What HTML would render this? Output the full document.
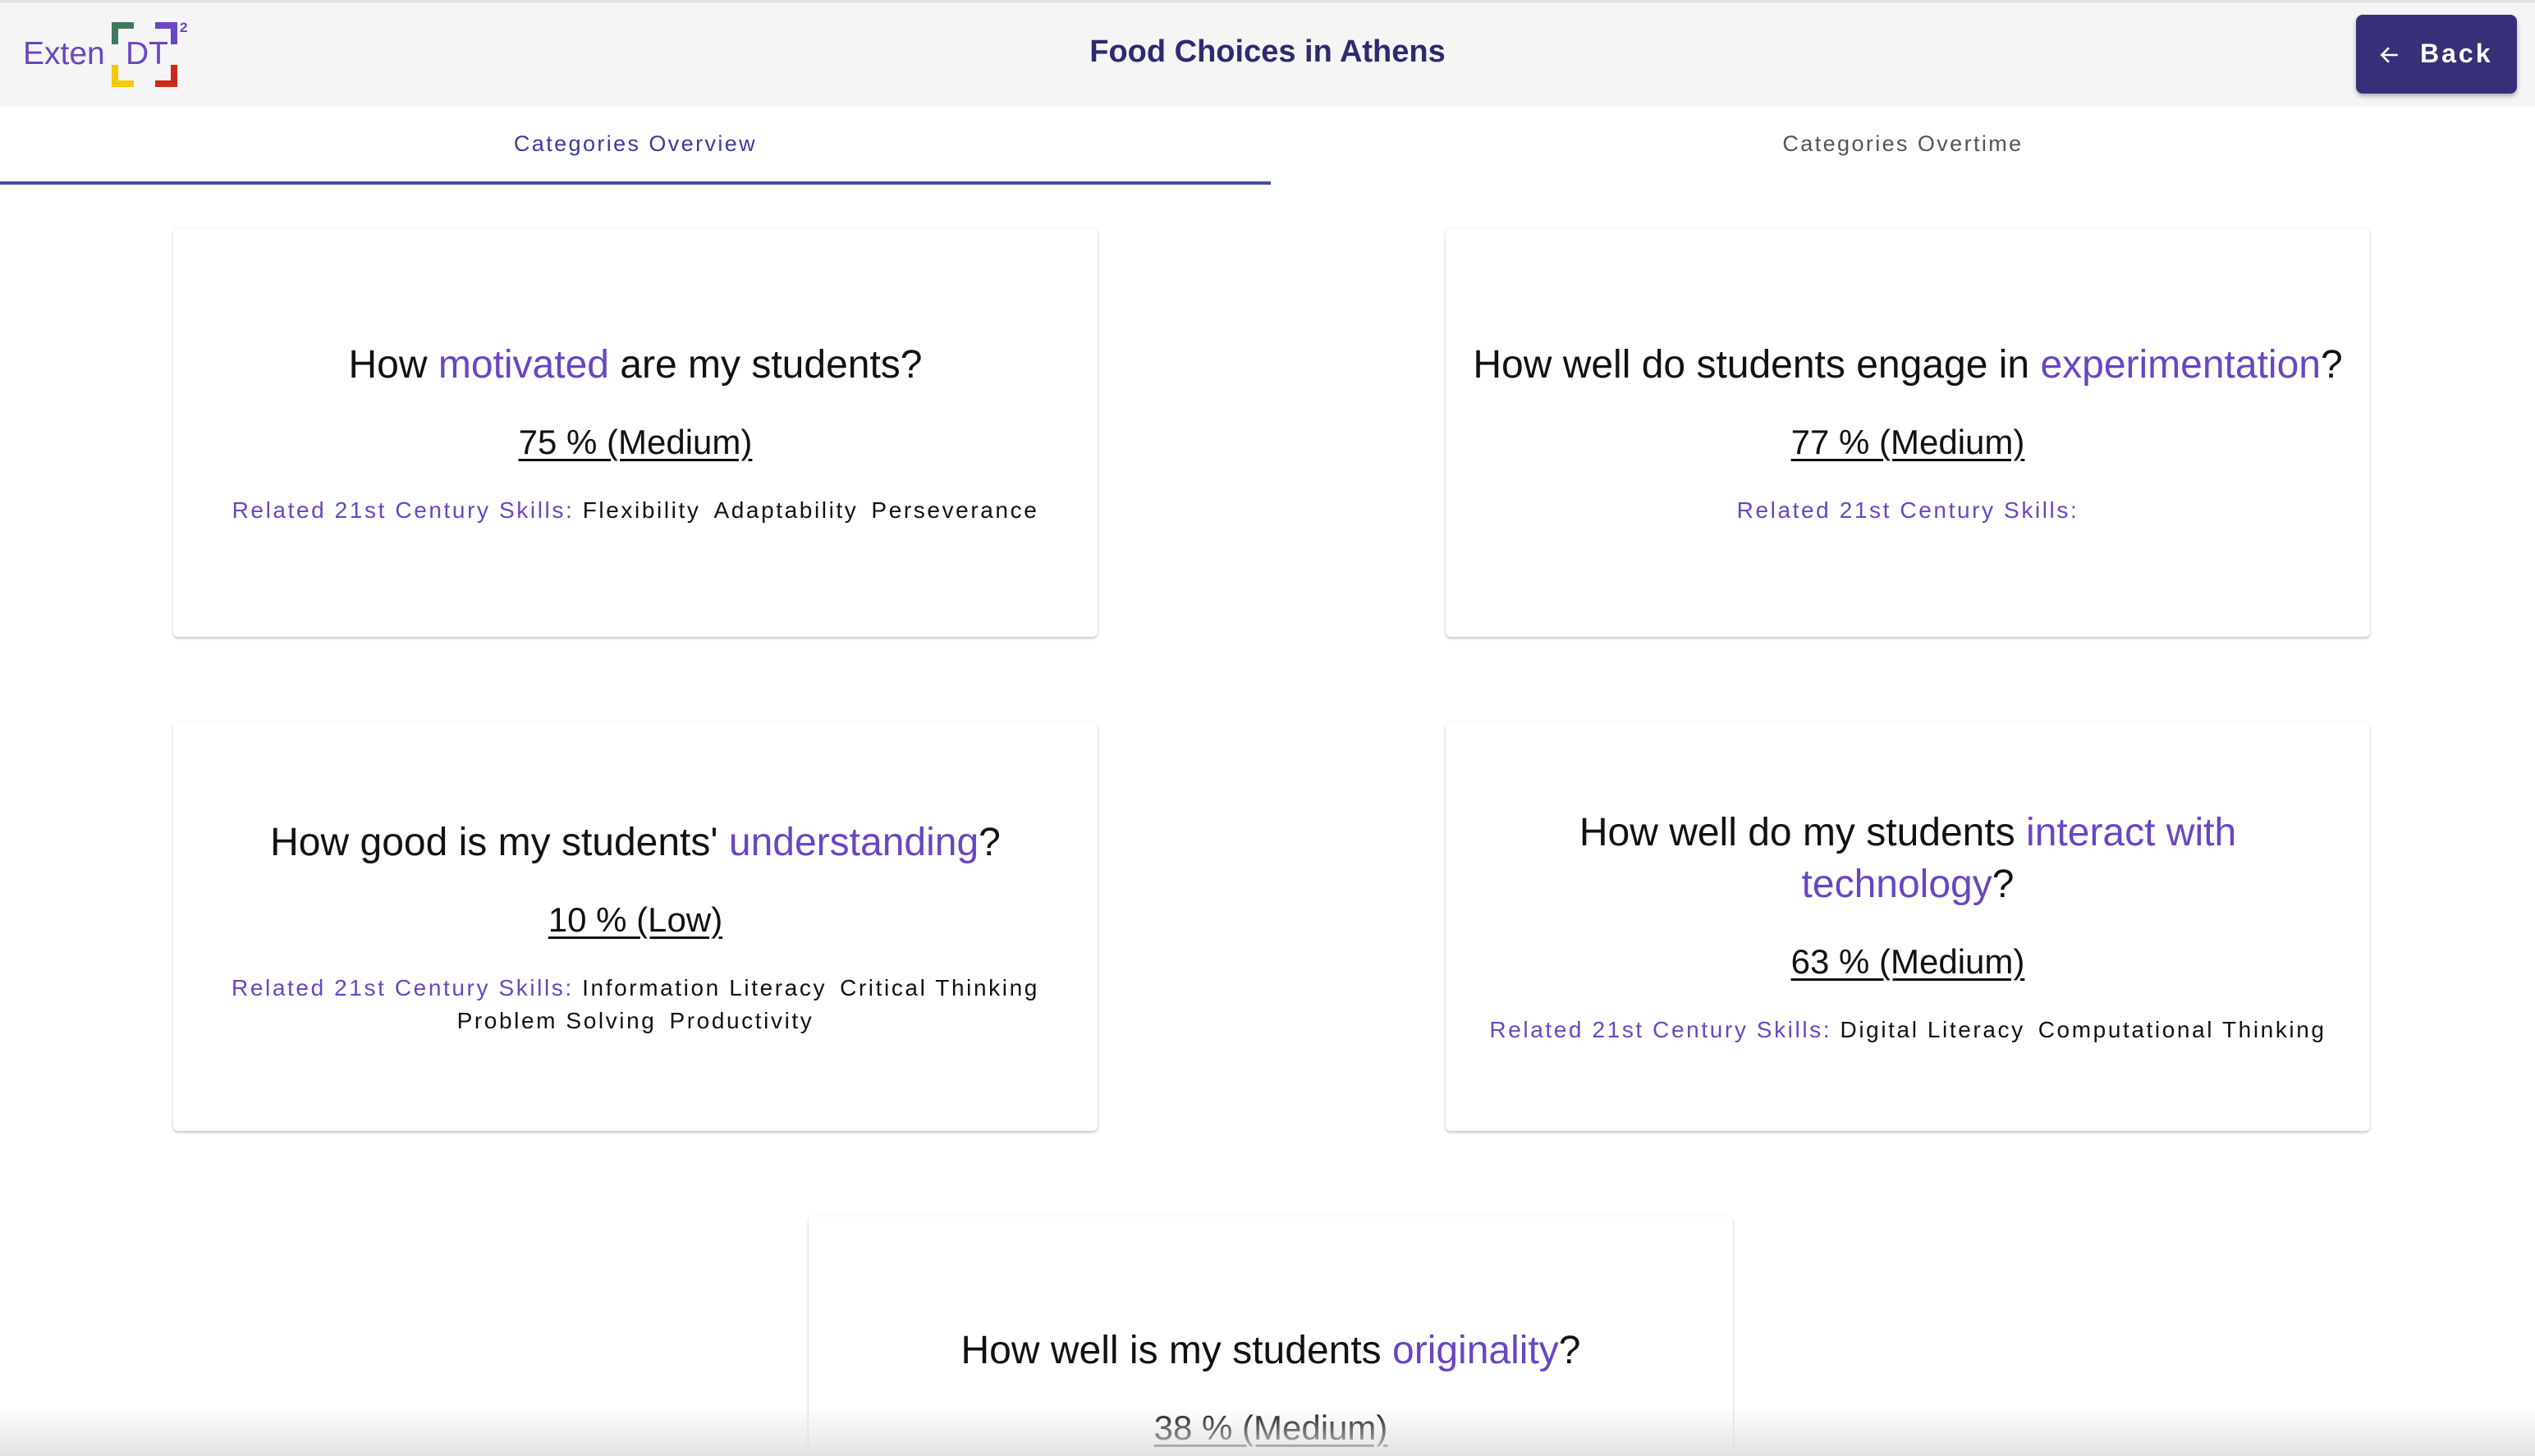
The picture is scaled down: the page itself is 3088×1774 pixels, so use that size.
<!DOCTYPE html>
<html><head><meta charset="utf-8">
<style>
*{box-sizing:border-box;margin:0;padding:0}
html,body{width:3088px;height:1774px;overflow:hidden;background:#fff;font-family:"Liberation Sans",sans-serif}
#w{position:relative;width:3088px;height:1774px;overflow:hidden}
.top{position:absolute;left:0;top:0;width:3088px;height:3px;background:#e2e2e2}
.hdr{position:absolute;left:0;top:3px;width:3088px;height:127px;background:#f5f5f5}
.exten{position:absolute;left:28px;top:44px;font-size:39px;color:#6a45c4}
.br{position:absolute;width:27px;height:27px}
.dt{position:absolute;left:153px;top:44px;font-size:39px;color:#6a45c4}
.sup{position:absolute;left:219px;top:24px;font-size:17px;font-weight:bold;color:#6a45c4}
.title{position:absolute;left:0;width:3088px;top:42px;text-align:center;font-size:38px;font-weight:bold;color:#2e2a6e}
.back{position:absolute;left:2870px;top:18px;width:196px;height:96px;background:#372f78;border-radius:8px;box-shadow:0 3px 6px rgba(0,0,0,.3);color:#fff;font-weight:bold;font-size:32px;letter-spacing:3px}
.back svg{position:absolute;left:28px;top:36px}
.back span{position:absolute;left:78px;top:29px}
.tab{position:absolute;top:160px;font-size:27px;letter-spacing:2.4px;text-align:center;width:1548px}
.ind{position:absolute;left:0;top:221px;width:1548px;height:4px;background:#3f4fa6}
.card{position:absolute;width:1126px;height:498px;background:#fff;border-radius:6px;box-shadow:0 2px 3px rgba(0,0,0,.22),0 0 2px rgba(0,0,0,.08);display:flex;flex-direction:column;justify-content:center;align-items:center;text-align:center;overflow:hidden}
.q{font-size:48px;line-height:63px;color:#111;padding:0 20px}
.p{color:#6a45c4}
.pct{font-size:42px;line-height:50px;margin-top:38px;text-decoration:underline;text-decoration-thickness:3px;text-underline-offset:6px;color:#111}
.sk{font-size:28px;line-height:40px;margin-top:38px;letter-spacing:2.6px;color:#111}
.sk .l{color:#6a45c4}
.sk b{font-weight:normal;margin-left:16px}
.fade{position:absolute;left:0;top:1715px;width:3088px;height:59px;background:linear-gradient(rgba(235,235,235,0),rgba(225,225,225,.95))}
</style></head><body><div id="w">
<div class="top"></div>
<div class="hdr"></div>
<div class="exten">Exten</div>
<div class="br" style="left:136px;top:27px;border-top:8px solid #3f7a5c;border-left:8px solid #3f7a5c"></div>
<div class="br" style="left:189px;top:27px;border-top:8px solid #6a45c4;border-right:8px solid #6a45c4"></div>
<div class="br" style="left:136px;top:79px;border-bottom:8px solid #f5c800;border-left:8px solid #f5c800"></div>
<div class="br" style="left:189px;top:79px;border-bottom:8px solid #cc2a12;border-right:8px solid #cc2a12"></div>
<div class="dt">DT</div>
<div class="sup">2</div>
<div class="title">Food Choices in Athens</div>
<div class="back"><svg width="26" height="26" viewBox="0 0 24 24"><path d="M21 12H4M11 4l-8 8 8 8" fill="none" stroke="#fff" stroke-width="2.4"/></svg><span>Back</span></div>
<div class="tab" style="left:0;color:#3a3a9e">Categories Overview</div>
<div class="tab" style="left:1548px;width:1540px;color:#555">Categories Overtime</div>
<div class="ind"></div>

<div class="card" style="left:211px;top:278px">
<div class="q">How <span class="p">motivated</span> are my students?</div>
<div class="pct">75 % (Medium)</div>
<div class="sk"><span class="l">Related 21st Century Skills:</span> Flexibility<b>Adaptability</b><b>Perseverance</b></div>
</div>

<div class="card" style="left:1761px;top:278px">
<div class="q">How well do students engage in <span class="p">experimentation</span>?</div>
<div class="pct">77 % (Medium)</div>
<div class="sk"><span class="l">Related 21st Century Skills:</span></div>
</div>

<div class="card" style="left:211px;top:880px">
<div class="q">How good is my students' <span class="p">understanding</span>?</div>
<div class="pct">10 % (Low)</div>
<div class="sk"><span class="l">Related 21st Century Skills:</span> Information Literacy<b>Critical Thinking</b><br>Problem Solving<b>Productivity</b></div>
</div>

<div class="card" style="left:1761px;top:880px">
<div class="q">How well do my students <span class="p">interact with<br>technology</span>?</div>
<div class="pct">63 % (Medium)</div>
<div class="sk"><span class="l">Related 21st Century Skills:</span> Digital Literacy<b>Computational Thinking</b></div>
</div>

<div class="card" style="left:985px;top:1482px;height:292px;justify-content:flex-start;padding-top:132px;border-radius:6px 6px 0 0">
<div class="q">How well is my students <span class="p">originality</span>?</div>
<div class="pct">38 % (Medium)</div>
</div>
<div class="fade"></div>
</div></body></html>
